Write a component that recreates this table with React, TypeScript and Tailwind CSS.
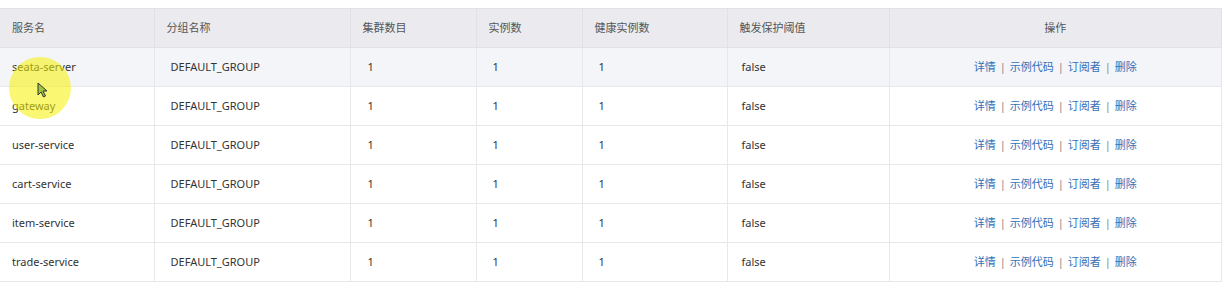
import React from "react";

const columns = [
  { label: "服务名", width: "w-[154px]" },
  { label: "分组名称", width: "w-[196px]" },
  { label: "集群数目", width: "w-[126px]" },
  { label: "实例数", width: "w-[106px]" },
  { label: "健康实例数", width: "w-[145px]" },
  { label: "触发保护阈值", width: "w-[162px]" },
];

const services = [
  "seata-server",
  "gateway",
  "user-service",
  "cart-service",
  "item-service",
  "trade-service",
];

const actions = ["详情", "示例代码", "订阅者", "删除"];

const App = () => {
  return (
    <div
      className="relative w-[1224px] h-[291px] bg-white pt-[8px] text-[11px] text-[#333]"
      style={{ fontFamily: '"Noto Sans", "Noto Sans CJK SC", sans-serif' }}
    >
      <table className="w-[1222px] table-fixed border-collapse">
        <thead>
          <tr className="h-[39px] bg-[#ebebef] border-t border-b border-[#e3e3e6]">
            {columns.map((c) => (
              <th
                key={c.label}
                className={`${c.width} px-[12px] text-left font-normal text-[#555] border-r border-[#e1e1e4]`}
              >
                {c.label}
              </th>
            ))}
            <th className="text-center font-normal text-[#555] border-r border-[#e1e1e4]">
              操作
            </th>
          </tr>
        </thead>
        <tbody>
          {services.map((name, i) => (
            <tr
              key={name}
              className={`h-[39px] border-b border-[#e8e8ea] ${i === 0 ? "bg-[#f4f5f8]" : "bg-white"}`}
            >
              <td className="px-[12px] pt-[1px] border-r border-[#e8e8ea]">{name}</td>
              <td className="px-[16px] pt-[1px] border-r border-[#e8e8ea]">DEFAULT_GROUP</td>
              <td className="px-[17px] pt-[1px] border-r border-[#e8e8ea]">1</td>
              <td className="px-[16px] pt-[1px] border-r border-[#e8e8ea]">1</td>
              <td className="px-[16px] pt-[1px] border-r border-[#e8e8ea]">1</td>
              <td className="px-[14px] pt-[1px] border-r border-[#e8e8ea]">false</td>
              <td className="text-center pt-[1px] border-r border-[#e8e8ea]">
                {actions.map((a, j) => (
                  <span key={a}>
                    {j > 0 && <span className="mx-[4px] text-[#888]">|</span>}
                    <a className="text-[#3371b8] cursor-pointer">{a}</a>
                  </span>
                ))}
              </td>
            </tr>
          ))}
        </tbody>
      </table>

      {/* cursor highlight */}
      <div className="absolute left-[9px] top-[57px] w-[62px] h-[62px] rounded-full bg-[#f5f000]/55 pointer-events-none" />
      <svg
        className="absolute left-[37px] top-[82px] pointer-events-none"
        width="12"
        height="16"
        viewBox="0 0 12 16"
      >
        <path d="M1 1 L1 13 L4 10 L6.5 15 L8.5 14 L6 9 L10 9 Z" fill="#9bc53d" stroke="#333" strokeWidth="1" />
      </svg>
    </div>
  );
};

export default App;
